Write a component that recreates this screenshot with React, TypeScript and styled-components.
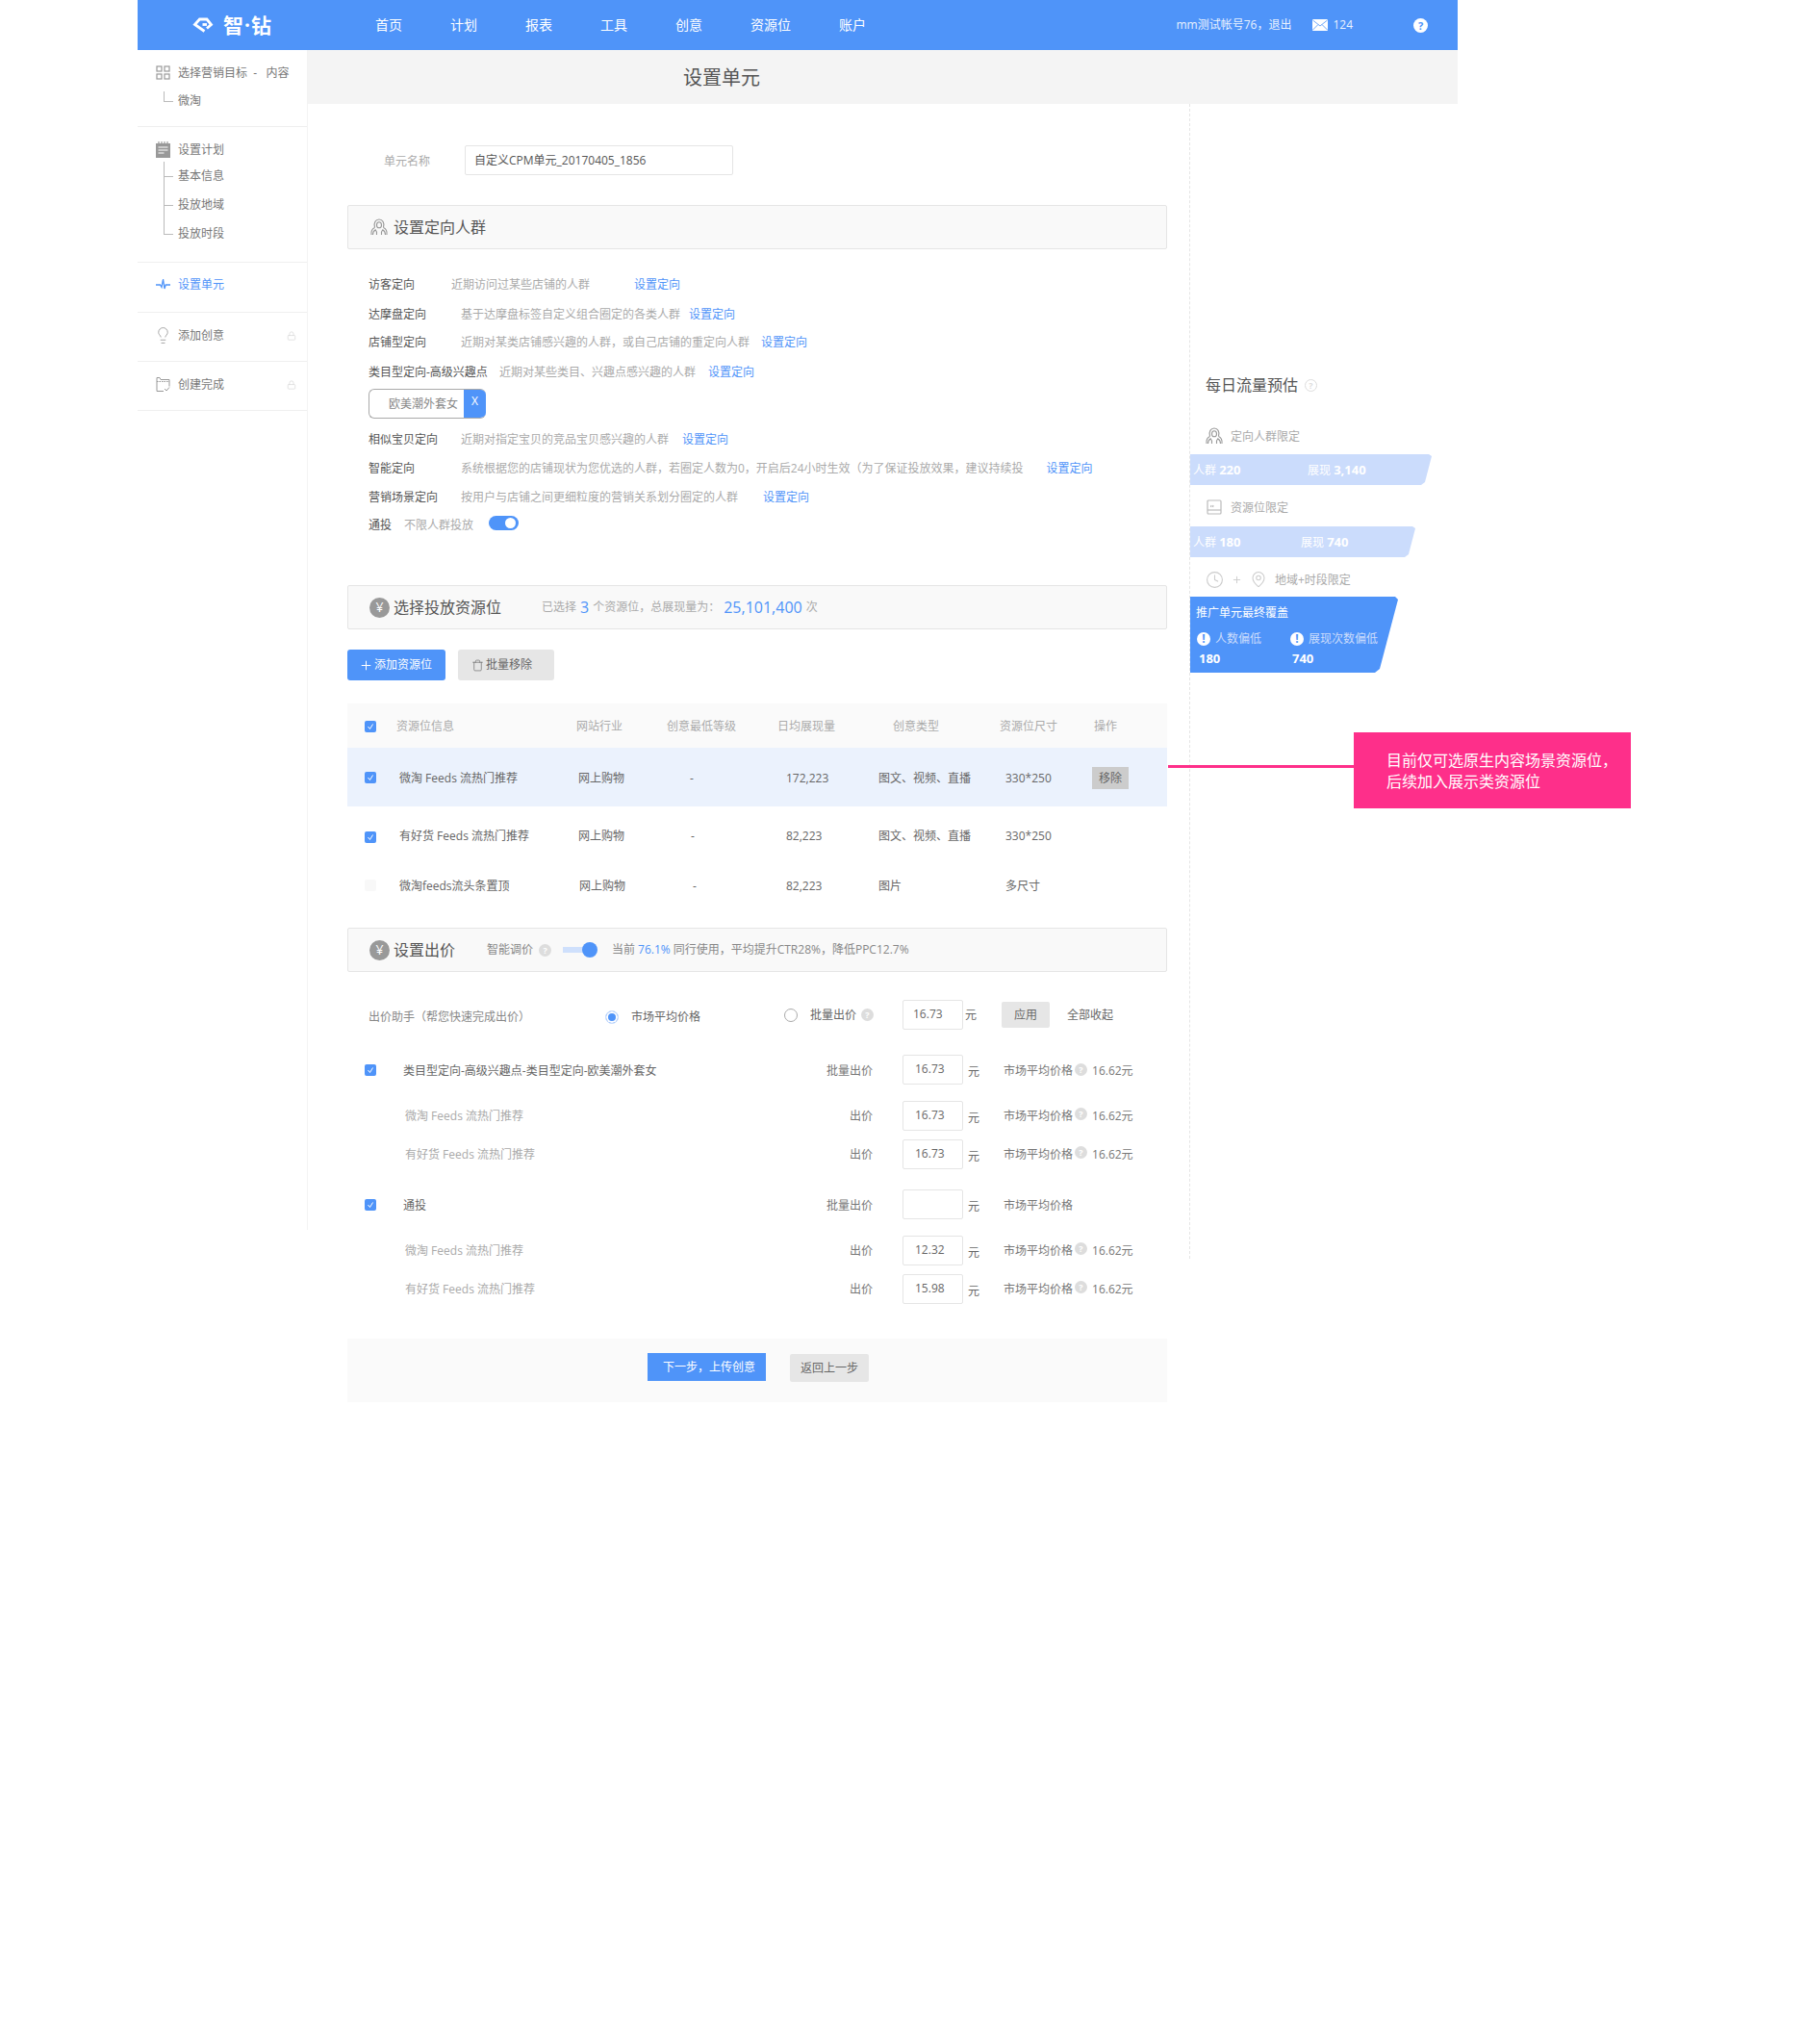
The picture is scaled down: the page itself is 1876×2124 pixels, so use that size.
import React from 'react'
import styled, { createGlobalStyle } from 'styled-components'
import { Clock, Lightbulb, Lock, MapPin, Plus, Trash } from 'lucide-react'

const BLUE = '#4f94f9'

const GlobalStyle = createGlobalStyle`
  html, body {
    margin: 0;
    background: #fff;
  }
  * {
    box-sizing: border-box;
  }
`

const navItems = ['首页', '计划', '报表', '工具', '创意', '资源位', '账户']

const targets = [
  { label: '访客定向', w: 86, desc: '近期访问过某些店铺的人群', gap: 46, top: 26 },
  { label: '达摩盘定向', w: 96, desc: '基于达摩盘标签自定义组合圈定的各类人群', gap: 9, top: 11 },
  { label: '店铺型定向', w: 96, desc: '近期对某类店铺感兴趣的人群，或自己店铺的重定向人群', gap: 12, top: 9 },
  { label: '类目型定向-高级兴趣点', w: 136, desc: '近期对某些类目、兴趣点感兴趣的人群', gap: 13, top: 11 },
]

const targetsAfterTag = [
  { label: '相似宝贝定向', w: 96, desc: '近期对指定宝贝的竞品宝贝感兴趣的人群', gap: 14, top: 11 },
  {
    label: '智能定向',
    w: 96,
    desc: '系统根据您的店铺现状为您优选的人群，若圈定人数为0，开启后24小时生效（为了保证投放效果，建议持续投',
    gap: 24,
    top: 10,
  },
  { label: '营销场景定向', w: 96, desc: '按用户与店铺之间更细粒度的营销关系划分圈定的人群', gap: 26, top: 10 },
]

const slots = [
  { name: '微淘 Feeds 流热门推荐', shop: 2, dash: 24, views: '172,223', type: '图文、视频、直播', size: '330*250', h: 61, active: true, checked: true, shift: 0 },
  { name: '有好货 Feeds 流热门推荐', shop: 2, dash: 25, views: '82,223', type: '图文、视频、直播', size: '330*250', h: 60, active: false, checked: true, shift: 2 },
  { name: '微淘feeds流头条置顶', shop: 3, dash: 27, views: '82,223', type: '图片', size: '多尺寸', h: 44, active: false, checked: false, shift: 0 },
]

const bids = [
  { top: 26, group: true, label: '类目型定向-高级兴趣点-类目型定向-欧美潮外套女', tag: '批量出价', value: '16.73', price: true },
  { top: 17, group: false, label: '微淘 Feeds 流热门推荐', tag: '出价', value: '16.73', price: true },
  { top: 9, group: false, label: '有好货 Feeds 流热门推荐', tag: '出价', value: '16.73', price: true },
  { top: 21, group: true, label: '通投', tag: '批量出价', value: '', price: false },
  { top: 17, group: false, label: '微淘 Feeds 流热门推荐', tag: '出价', value: '12.32', price: true },
  { top: 9, group: false, label: '有好货 Feeds 流热门推荐', tag: '出价', value: '15.98', price: true },
]

const PeopleIcon = () => (
  <svg width="20" height="20" viewBox="0 0 20 20" fill="none" stroke="#999" strokeWidth="1.1">
    <path d="M5.5 10.5C4 5.5 6.5 2 10 2s6 3.500 4.500 8.500" />
    <path d="M7.500 8c0-2 1-3.200 2.500-3.200S12.500 6 12.500 8c0 1.500-1 2.800-2.500 2.800S7.500 9.500 7.500 8z" />
    <path d="M5.500 10.500C3 11.500 1.500 13.500 2 18M3.500 18c0-2.500.8-4 2.800-5.200 1 .9 1.500 2.500 1.200 5.200" />
    <path d="M14.500 10.500C17 11.500 18.500 13.500 18 18M16.500 18c0-2.500-.8-4-2.800-5.200-1 .9-1.500 2.500-1.200 5.200" />
  </svg>
)

const GridIcon = () => (
  <svg width="15" height="15" viewBox="0 0 15 15" fill="none" stroke="#999" strokeWidth="1.2">
    <rect x="1" y="1" width="5" height="5" />
    <rect x="9" y="1" width="5" height="5" />
    <rect x="1" y="9" width="5" height="5" />
    <rect x="9" y="9" width="5" height="5" />
  </svg>
)

const PlanIcon = () => (
  <svg width="15" height="17" viewBox="0 0 15 17">
    <path d="M0 2h15v15H0z" fill="#999" />
    <path d="M3 0v3M6 0v3M9 0v3M12 0v3" stroke="#999" strokeWidth="1.200" />
    <path d="M2.500 6h10M2.500 9h10M2.500 12h6" stroke="#fff" strokeWidth="1.200" />
  </svg>
)

const PulseIcon = () => (
  <svg width="15" height="15" viewBox="0 0 15 15" fill="none" stroke={BLUE} strokeWidth="1.300">
    <path d="M0 8h4.500L6 10.500 7.500 2 9 12l1.200-4H15" />
  </svg>
)

const FolderCheckIcon = () => (
  <svg width="15" height="17" viewBox="0 0 15 17" fill="none" stroke="#999" strokeWidth="1">
    <path d="M8 15.500H1V1.500h3l1 2h9v7" />
    <path d="M1 5.500h13" strokeDasharray="1.500 1" />
    <path d="M9 13l2 2 3-3.500" />
  </svg>
)

const SlotIcon = () => (
  <svg width="16" height="16" viewBox="0 0 16 16" fill="none" stroke="#bbb" strokeWidth="1.200">
    <rect x="1" y="1" width="14" height="14" rx="1" />
    <path d="M1 11h14" />
    <path d="M5 6l-.5 2M7 6l-.5 2" />
  </svg>
)

const MailIcon = () => (
  <svg width="16" height="12" viewBox="0 0 16 12">
    <rect width="16" height="12" rx="1" fill="#fff" />
    <path d="M0.500 1l7.500 6 7.500-6M0.500 11l5.500-5.500M15.500 11L10 5.500" fill="none" stroke={BLUE} strokeWidth="0.800" />
  </svg>
)

const LogoMark = () => (
  <svg width="22" height="16" viewBox="0 0 22 16" fill="none" stroke="#fff" strokeWidth="2.800">
    <path d="M12.500 14.500L2.500 7.500 7.500 2H15l4.500 5.500L15 11.500" />
    <path d="M15 7.500h-4.500" />
  </svg>
)

const Check = () => (
  <svg width="12" height="12" viewBox="0 0 12 12" fill="none" stroke="#fff" strokeWidth="1">
    <path d="M3.500 6l2 2.500 3-5" />
  </svg>
)

const App = () => {
  return (
    <Root>
      <GlobalStyle />
      <Header>
        <Logo>
          <LogoMark />
          <LogoWord>智·钻</LogoWord>
        </Logo>
        <Nav>
          {navItems.map((item) => (
            <NavItem key={item}>{item}</NavItem>
          ))}
        </Nav>
        <UserArea>
          <span>mm测试帐号76，退出</span>
          <MailBox>
            <MailIcon />
            124
          </MailBox>
          <HelpDot $kind="white" $size={15}>?</HelpDot>
        </UserArea>
      </Header>

      <Body>
        <Sidebar>
          <SideGroup $h={80} $pad={13}>
            <SideRow>
              <IconSlot><GridIcon /></IconSlot>
              <span>选择营销目标&nbsp;&nbsp;-&nbsp;&nbsp;&nbsp;内容</span>
            </SideRow>
            <SubList $top={10}>
              <SubRow>
                <Stem $last $h={20} />
                微淘
              </SubRow>
            </SubList>
          </SideGroup>
          <SideGroup $h={141} $pad={13}>
            <SideRow>
              <IconSlot><PlanIcon /></IconSlot>
              <span>设置计划</span>
            </SideRow>
            <SubList $top={3}>
              <SubRow $h={30}><Stem $h={30} />基本信息</SubRow>
              <SubRow $h={30}><Stem $h={30} />投放地域</SubRow>
              <SubRow $h={30}><Stem $last $h={30} />投放时段</SubRow>
            </SubList>
          </SideGroup>
          <SideGroup $h={52} $pad={12}>
            <SideRow $active>
              <IconSlot><PulseIcon /></IconSlot>
              <span>设置单元</span>
            </SideRow>
          </SideGroup>
          <SideGroup $h={51} $pad={13}>
            <SideRow>
              <IconSlot><Lightbulb size={19} color="#999" strokeWidth={1.1} /></IconSlot>
              <span>添加创意</span>
              <LockSlot><Lock size={10} color="#ddd" /></LockSlot>
            </SideRow>
          </SideGroup>
          <SideGroup $h={51} $pad={13}>
            <SideRow>
              <IconSlot><FolderCheckIcon /></IconSlot>
              <span>创建完成</span>
              <LockSlot><Lock size={10} color="#ddd" /></LockSlot>
            </SideRow>
          </SideGroup>
        </Sidebar>

        <Content>
          <TitleBar>设置单元</TitleBar>
          <Columns>
            <Main>
              <NameRow>
                <NameLabel>单元名称</NameLabel>
                <NameInput>自定义CPM单元_20170405_1856</NameInput>
              </NameRow>

              <SectionHead $top={31}>
                <IconSlot><PeopleIcon /></IconSlot>
                <SectionTitle>设置定向人群</SectionTitle>
              </SectionHead>

              {targets.map((t) => (
                <TargetRow key={t.label} $top={t.top}>
                  <TargetLabel $w={t.w}>{t.label}</TargetLabel>
                  <Muted>{t.desc}</Muted>
                  <TargetLink $gap={t.gap}>设置定向</TargetLink>
                </TargetRow>
              ))}

              <Tag>
                <TagText>欧美潮外套女</TagText>
                <TagClose>X</TagClose>
              </Tag>

              {targetsAfterTag.map((t) => (
                <TargetRow key={t.label} $top={t.top}>
                  <TargetLabel $w={t.w}>{t.label}</TargetLabel>
                  <Muted>{t.desc}</Muted>
                  <TargetLink $gap={t.gap}>设置定向</TargetLink>
                </TargetRow>
              ))}

              <TargetRow $top={9}>
                <TargetLabel $w={37}>通投</TargetLabel>
                <Muted>不限人群投放</Muted>
                <Toggle />
              </TargetRow>

              <SectionHead $top={53}>
                <CoinIcon>¥</CoinIcon>
                <SectionTitle>选择投放资源位</SectionTitle>
                <SummaryText>
                  已选择<BlueNum $size={16} $side={4}>3</BlueNum>个资源位，总展现量为：
                  <BlueNum $size={16} $side={4}>25,101,400</BlueNum>次
                </SummaryText>
              </SectionHead>

              <ButtonRow>
                <PrimaryButton>
                  <Plus size={15} strokeWidth={1.6} />
                  添加资源位
                </PrimaryButton>
                <GrayButton>
                  <Trash size={13} strokeWidth={1.2} />
                  批量移除
                </GrayButton>
              </ButtonRow>

              <TableHead>
                <CheckCell $shift={1}><CheckBox $on><Check /></CheckBox></CheckCell>
                <Cell>资源位信息</Cell>
                <Cell>网站行业</Cell>
                <Cell>创意最低等级</Cell>
                <Cell>日均展现量</Cell>
                <Cell $pad={15}>创意类型</Cell>
                <Cell>资源位尺寸</Cell>
                <Cell $pad={2}>操作</Cell>
              </TableHead>
              {slots.map((s) => (
                <TableRow key={s.name} $h={s.h} $active={s.active}>
                  <CheckCell $shift={s.shift}>
                    <CheckBox $on={s.checked}>{s.checked && <Check />}</CheckBox>
                  </CheckCell>
                  <Cell $pad={3}>{s.name}</Cell>
                  <Cell $pad={s.shop}>网上购物</Cell>
                  <Cell $pad={s.dash}>-</Cell>
                  <Cell $pad={9}>{s.views}</Cell>
                  <Cell>{s.type}</Cell>
                  <Cell $pad={6}>{s.size}</Cell>
                  <Cell>{s.active && <RemoveTag>移除</RemoveTag>}</Cell>
                </TableRow>
              ))}

              <SectionHead $top={22}>
                <CoinIcon>¥</CoinIcon>
                <SectionTitle>设置出价</SectionTitle>
                <SmartLabel>智能调价</SmartLabel>
                <HelpDot $kind="solid" $size={13}>?</HelpDot>
                <Slider />
                <SmartText>
                  当前<BlueNum $size={12} $side={3}>76.1%</BlueNum>同行使用，平均提升CTR28%，降低PPC12.7%
                </SmartText>
              </SectionHead>

              <HelperRow>
                <HelperCell $shift={5}>出价助手（帮您快速完成出价）</HelperCell>
                <HelperCell $shift={5} $dark>
                  <Radio $on />
                  市场平均价格
                </HelperCell>
                <HelperCell $dark>
                  <Radio />
                  批量出价
                  <HelpDot $kind="solid" $size={13}>?</HelpDot>
                </HelperCell>
                <HelperCell $dark>
                  <PriceInput $pad={10}>16.73</PriceInput>
                  元
                </HelperCell>
                <div><ApplyButton>应用</ApplyButton></div>
                <HelperCell $dark>全部收起</HelperCell>
              </HelperRow>

              {bids.map((b, i) => (
                <BidRow key={i} $top={b.top}>
                  <BidCheck>{b.group && <CheckBox $on><Check /></CheckBox>}</BidCheck>
                  <BidLabel $group={b.group}>{b.label}</BidLabel>
                  <BidTag $group={b.group}>{b.tag}</BidTag>
                  <PriceInput $pad={12}>{b.value}</PriceInput>
                  <Unit>元</Unit>
                  <MarketPrice $group={b.group}>
                    市场平均价格
                    {b.price && <HelpDot $kind="solid" $size={13}>?</HelpDot>}
                    {b.price && <MarketValue>16.62元</MarketValue>}
                  </MarketPrice>
                </BidRow>
              ))}

              <Footer>
                <NextButton>下一步，上传创意</NextButton>
                <BackButton>返回上一步</BackButton>
              </Footer>
            </Main>

            <Aside>
              <AsideTitle>
                每日流量预估
                <HelpDot $kind="outline" $size={13}>?</HelpDot>
              </AsideTitle>
              <LimitRow $top={31}>
                <LimitIcon><PeopleIcon /></LimitIcon>
                <span>定向人群限定</span>
              </LimitRow>
              <LightBar $w={251} $top={9}>
                <BarPair $w={119}>人群 <b>220</b></BarPair>
                <BarPair>展现 <b>3,140</b></BarPair>
              </LightBar>
              <LimitRow $top={13}>
                <LimitIcon><SlotIcon /></LimitIcon>
                <span>资源位限定</span>
              </LimitRow>
              <LightBar $w={234} $top={10}>
                <BarPair $w={112}>人群 <b>180</b></BarPair>
                <BarPair>展现 <b>740</b></BarPair>
              </LightBar>
              <LimitRow $top={13}>
                <Clock size={19} color="#ccc" strokeWidth={1.4} />
                <Plus size={11} color="#ccc" />
                <MapPin size={18} color="#ccc" strokeWidth={1.4} />
                <span>地域+时段限定</span>
              </LimitRow>
              <FinalBar>
                <FinalTitle>推广单元最终覆盖</FinalTitle>
                <FinalGrid>
                  <FinalWarn><WarnDot>!</WarnDot>人数偏低</FinalWarn>
                  <FinalWarn><WarnDot>!</WarnDot>展现次数偏低</FinalWarn>
                  <FinalValue>180</FinalValue>
                  <FinalValue>740</FinalValue>
                </FinalGrid>
              </FinalBar>
            </Aside>
          </Columns>
        </Content>
      </Body>

      <Callout>
        <Leader />
        <Note>
          目前仅可选原生内容场景资源位，
          <br />
          后续加入展示类资源位
        </Note>
      </Callout>
    </Root>
  )
}

export default App

const Root = styled.div`
  position: relative;
  width: 1372px;
  min-height: 2124px;
  margin-left: 143px;
  font-family: 'Open Sans', 'Noto Sans CJK SC', sans-serif;
  font-size: 12px;
  line-height: 20px;
  color: #666;
`
const Header = styled.header`
  display: flex;
  align-items: center;
  height: 52px;
  background: ${BLUE};
  color: #fff;
`
const Logo = styled.div`
  display: flex;
  align-items: center;
  gap: 10px;
  width: 247px;
  padding-left: 57px;
`
const LogoWord = styled.span`
  font-size: 21px;
  font-weight: 700;
  letter-spacing: 1px;
`
const Nav = styled.nav`
  display: flex;
  gap: 50px;
`
const NavItem = styled.span`
  font-size: 14px;
`
const UserArea = styled.div`
  display: flex;
  align-items: center;
  margin-left: auto;
  padding-right: 31px;
  color: #eaf2fe;
`
const MailBox = styled.span`
  display: flex;
  align-items: center;
  gap: 5px;
  margin: 0 63px 0 22px;
`
const HelpDot = styled.span<{ $kind: 'white' | 'solid' | 'outline'; $size: number }>`
  display: inline-flex;
  flex: none;
  align-items: center;
  justify-content: center;
  width: ${(p) => p.$size}px;
  height: ${(p) => p.$size}px;
  border-radius: 50%;
  font-size: ${(p) => p.$size - 4}px;
  font-weight: 700;
  line-height: 1;
  background: ${(p) => (p.$kind === 'white' ? '#fff' : p.$kind === 'solid' ? '#ddd' : 'transparent')};
  color: ${(p) => (p.$kind === 'white' ? BLUE : p.$kind === 'solid' ? '#fff' : '#ddd')};
  border: ${(p) => (p.$kind === 'outline' ? '1px solid #ddd' : 'none')};
`
const Body = styled.div`
  display: flex;
  align-items: flex-start;
`
const Sidebar = styled.aside`
  flex: none;
  width: 177px;
  height: 1226px;
  border-right: 1px solid #f3f3f3;
`
const SideGroup = styled.div<{ $h: number; $pad: number }>`
  height: ${(p) => p.$h}px;
  padding-top: ${(p) => p.$pad}px;
  border-bottom: 1px solid #efefef;
`
const SideRow = styled.div<{ $active?: boolean }>`
  display: flex;
  align-items: center;
  gap: 8px;
  height: 20px;
  padding-left: 19px;
  color: ${(p) => (p.$active ? BLUE : '#777')};
  span + span {
    padding-top: 1px;
  }
`
const IconSlot = styled.span`
  display: flex;
  flex: none;
  align-items: center;
  justify-content: center;
  width: 15px;
  svg {
    flex: none;
  }
`
const LockSlot = styled.span`
  display: flex;
  margin-left: auto;
  margin-right: 11px;
`
const SubList = styled.div<{ $top: number }>`
  margin-top: ${(p) => p.$top}px;
  padding-left: 27px;
`
const SubRow = styled.div<{ $h?: number }>`
  display: flex;
  align-items: center;
  gap: 5px;
  height: ${(p) => p.$h ?? 20}px;
  color: #777;
`
const Stem = styled.span<{ $last?: boolean; $h: number }>`
  flex: none;
  width: 10px;
  height: ${(p) => p.$h}px;
  background:
    linear-gradient(#bbb, #bbb) left top / 1px ${(p) => (p.$last ? '50%' : '100%')} no-repeat,
    linear-gradient(#bbb, #bbb) left center / 10px 1px no-repeat;
`
const Content = styled.div`
  flex: 1;
  min-width: 0;
`
const TitleBar = styled.div`
  height: 56px;
  padding-left: 390px;
  background: #f4f4f4;
  color: #555;
  font-size: 20px;
  line-height: 57px;
`
const Columns = styled.div`
  display: flex;
  align-items: flex-start;
`
const Main = styled.main`
  flex: none;
  width: 916px;
  padding: 0 23px 0 41px;
`
const NameRow = styled.div`
  display: flex;
  align-items: center;
  margin-top: 43px;
`
const NameLabel = styled.span`
  width: 122px;
  padding: 2px 0 0 38px;
  color: #aaa;
`
const NameInput = styled.div`
  width: 279px;
  height: 31px;
  padding-left: 9px;
  border: 1px solid #e5e5e5;
  border-radius: 2px;
  color: #555;
  line-height: 29px;
`
const SectionHead = styled.div<{ $top: number }>`
  display: flex;
  align-items: center;
  height: 46px;
  margin-top: ${(p) => p.$top}px;
  padding-left: 22px;
  background: #f9f9f9;
  border: 1px solid #e5e5e5;
  border-radius: 2px;
  ${IconSlot} {
    width: 20px;
    margin-right: 5px;
  }
`
const SectionTitle = styled.span`
  color: #555;
  font-size: 16px;
`
const CoinIcon = styled.span`
  display: flex;
  flex: none;
  align-items: center;
  justify-content: center;
  width: 21px;
  height: 21px;
  margin-right: 4px;
  border-radius: 50%;
  background: #999;
  color: #fff;
  font-size: 14px;
`
const TargetRow = styled.div<{ $top: number }>`
  display: flex;
  align-items: center;
  height: 20px;
  margin-top: ${(p) => p.$top}px;
  padding: 2px 0 0 22px;
  white-space: nowrap;
`
const TargetLabel = styled.span<{ $w: number }>`
  flex: none;
  width: ${(p) => p.$w}px;
  color: #555;
`
const Muted = styled.span`
  color: #aaa;
`
const TargetLink = styled.span<{ $gap: number }>`
  margin-left: ${(p) => p.$gap}px;
  color: ${BLUE};
`
const Tag = styled.div`
  display: flex;
  width: 122px;
  height: 31px;
  margin: 8px 0 0 22px;
  overflow: hidden;
  border: 1px solid #aaa;
  border-right: 0;
  border-radius: 6px;
`
const TagText = styled.span`
  flex: 1;
  padding-left: 20px;
  color: #888;
  line-height: 29px;
`
const TagClose = styled.span`
  width: 23px;
  margin: -1px 0;
  background: ${BLUE};
  color: #fff;
  font-size: 12px;
  line-height: 26px;
  text-align: center;
`
const Toggle = styled.span`
  display: flex;
  justify-content: flex-end;
  width: 31px;
  height: 15px;
  margin: -5px 0 0 16px;
  padding: 2px 3px;
  border-radius: 8px;
  background: ${BLUE};
  &::after {
    content: '';
    width: 11px;
    height: 11px;
    border-radius: 50%;
    background: #fff;
  }
`
const SummaryText = styled.span`
  display: flex;
  align-items: center;
  margin-left: 42px;
  color: #aaa;
`
const BlueNum = styled.span<{ $size: number; $side: number }>`
  margin: 0 ${(p) => p.$side}px;
  color: ${BLUE};
  font-size: ${(p) => p.$size}px;
`
const ButtonRow = styled.div`
  display: flex;
  gap: 13px;
  margin: 21px 0 24px;
`
const PrimaryButton = styled.div`
  display: flex;
  align-items: center;
  gap: 1px;
  width: 102px;
  height: 32px;
  padding-left: 12px;
  border-radius: 3px;
  background: ${BLUE};
  color: #fff;
`
const GrayButton = styled.div`
  display: flex;
  align-items: center;
  gap: 2px;
  width: 100px;
  height: 32px;
  padding-left: 14px;
  border-radius: 3px;
  background: #e6e6e6;
  color: #666;
`
const tableColumns = '51px 187px 94px 115px 105px 126px 96px 78px'
const TableHead = styled.div`
  display: grid;
  grid-template-columns: ${tableColumns};
  align-items: center;
  height: 46px;
  background: #fafafa;
  color: #aaa;
`
const TableRow = styled.div<{ $h: number; $active: boolean }>`
  display: grid;
  grid-template-columns: ${tableColumns};
  align-items: center;
  height: ${(p) => p.$h}px;
  background: ${(p) => (p.$active ? '#ebf2fd' : '#fff')};
  color: #666;
`
const CheckCell = styled.div<{ $shift: number }>`
  display: flex;
  padding: ${(p) => p.$shift * 2}px 0 0 18px;
`
const Cell = styled.div<{ $pad?: number }>`
  padding: 2px 0 0 ${(p) => p.$pad ?? 0}px;
  white-space: nowrap;
`
const CheckBox = styled.span<{ $on?: boolean }>`
  display: flex;
  flex: none;
  width: 12px;
  height: 12px;
  border-radius: 2px;
  background: ${(p) => (p.$on ? BLUE : '#f8f8f8')};
`
const RemoveTag = styled.span`
  display: block;
  width: 38px;
  height: 23px;
  background: #ccc;
  line-height: 23px;
  text-align: center;
`
const SmartLabel = styled.span`
  margin: 0 6px 0 33px;
  color: #888;
`
const Slider = styled.span`
  display: flex;
  align-items: center;
  width: 36px;
  height: 16px;
  margin: 0 15px 0 12px;
  background: linear-gradient(#cfe0fc, #cfe0fc) left center / 24px 6px no-repeat;
  &::after {
    content: '';
    width: 16px;
    height: 16px;
    margin-left: 20px;
    border-radius: 50%;
    background: ${BLUE};
  }
`
const SmartText = styled.span`
  color: #888;
`
const HelperRow = styled.div`
  display: grid;
  grid-template-columns: 246px 186px 123px 103px 68px 1fr;
  align-items: center;
  height: 31px;
  margin-top: 29px;
  padding-left: 22px;
`
const HelperCell = styled.div<{ $shift?: number; $dark?: boolean }>`
  display: flex;
  align-items: center;
  gap: 2px;
  margin-top: ${(p) => p.$shift ?? 0}px;
  color: ${(p) => (p.$dark ? '#666' : '#888')};
  white-space: nowrap;
  ${HelpDot} {
    margin-left: 3px;
  }
`
const Radio = styled.span<{ $on?: boolean }>`
  flex: none;
  width: 14px;
  height: 14px;
  margin-right: 11px;
  border-radius: 50%;
  background: ${(p) => (p.$on ? BLUE : '#fff')};
  border: 1px solid ${(p) => (p.$on ? '#cfe0fc' : '#aaa')};
  box-shadow: ${(p) => (p.$on ? 'inset 0 0 0 2px #fff' : 'none')};
`
const PriceInput = styled.div<{ $pad: number }>`
  flex: none;
  width: 63px;
  height: 31px;
  padding-left: ${(p) => p.$pad}px;
  border: 1px solid #e5e5e5;
  border-radius: 2px;
  line-height: 28px;
  color: #666;
`
const ApplyButton = styled.div`
  width: 50px;
  height: 27px;
  border-radius: 2px;
  background: #e6e6e6;
  line-height: 27px;
  text-align: center;
`
const BidRow = styled.div<{ $top: number }>`
  display: grid;
  grid-template-columns: 58px 410px 109px 63px 42px 1fr;
  align-items: center;
  height: 31px;
  margin-top: ${(p) => p.$top}px;
  white-space: nowrap;
`
const BidCheck = styled.div`
  display: flex;
  padding-left: 18px;
`
const BidLabel = styled.div<{ $group: boolean }>`
  padding: ${(p) => (p.$group ? '3px 0 0 0' : '0 0 0 2px')};
  color: ${(p) => (p.$group ? '#666' : '#aaa')};
`
const BidTag = styled.div<{ $group: boolean }>`
  padding: ${(p) => (p.$group ? '3px' : '0')} 31px 0 0;
  text-align: right;
  color: #777;
`
const Unit = styled.div`
  padding: 4px 0 0 5px;
`
const MarketPrice = styled.div<{ $group: boolean }>`
  display: flex;
  align-items: center;
  gap: 2px;
  padding-top: ${(p) => (p.$group ? 3 : 0)}px;
  color: #777;
  ${HelpDot} {
    margin-bottom: 4px;
  }
`
const MarketValue = styled.span`
  margin-left: 3px;
`
const Footer = styled.div`
  display: flex;
  align-items: flex-start;
  gap: 25px;
  height: 66px;
  margin-top: 36px;
  padding: 15px 0 0 312px;
  background: #fafafa;
`
const NextButton = styled.div`
  width: 123px;
  height: 29px;
  padding-left: 16px;
  background: ${BLUE};
  color: #fff;
  line-height: 29px;
`
const BackButton = styled.div`
  width: 82px;
  height: 29px;
  margin-top: 1px;
  border-radius: 2px;
  background: #e6e6e6;
  line-height: 29px;
  text-align: center;
`
const Aside = styled.aside`
  flex: 1;
  height: 1200px;
  padding-top: 280px;
  border-left: 1px dashed #e5e5e5;
`
const AsideTitle = styled.div`
  display: flex;
  align-items: center;
  gap: 7px;
  height: 24px;
  padding-left: 16px;
  color: #555;
  font-size: 16px;
`
const LimitRow = styled.div<{ $top: number }>`
  display: flex;
  align-items: center;
  gap: 8px;
  height: 20px;
  margin-top: ${(p) => p.$top}px;
  padding-left: 16px;
  color: #aaa;
  svg {
    flex: none;
  }
  span {
    padding-top: 2px;
  }
`
const LimitIcon = styled.span`
  display: flex;
  justify-content: center;
  width: 18px;
  padding: 0 !important;
`
const LightBar = styled.div<{ $w: number; $top: number }>`
  display: flex;
  align-items: center;
  width: ${(p) => p.$w}px;
  height: 32px;
  margin-top: ${(p) => p.$top}px;
  padding-left: 3px;
  background: #cbdcfc;
  color: #fff;
  clip-path: polygon(0 0, calc(100% - 3px) 0, 100% 2px, calc(100% - 7px) calc(100% - 3px), calc(100% - 11px) 100%, 0 100%);
`
const BarPair = styled.span<{ $w?: number }>`
  width: ${(p) => (p.$w ? `${p.$w}px` : 'auto')};
  b {
    font-size: 13px;
  }
`
const FinalBar = styled.div`
  width: 216px;
  height: 79px;
  margin-top: 8px;
  padding: 7px 0 0 6px;
  background: ${BLUE};
  color: #fff;
  clip-path: polygon(0 0, calc(100% - 3px) 0, 100% 3px, calc(100% - 19px) calc(100% - 4px), calc(100% - 24px) 100%, 0 100%);
`
const FinalTitle = styled.div`
  height: 20px;
`
const FinalGrid = styled.div`
  display: grid;
  grid-template-columns: 97px 1fr;
  margin-top: 7px;
  padding-left: 1px;
`
const FinalWarn = styled.div`
  display: flex;
  align-items: center;
  gap: 5px;
  color: #cbdcfc;
`
const WarnDot = styled.span`
  display: flex;
  align-items: center;
  justify-content: center;
  width: 14px;
  height: 14px;
  border-radius: 50%;
  background: #fff;
  color: ${BLUE};
  font-size: 12px;
  font-weight: 700;
`
const FinalValue = styled.div`
  padding-left: 2px;
  font-size: 13px;
  font-weight: 700;
`
const Callout = styled.div`
  position: absolute;
  top: 761px;
  left: 1071px;
  display: flex;
  align-items: flex-start;
`
const Leader = styled.span`
  width: 193px;
  height: 3px;
  margin-top: 34px;
  background: #fe2f8a;
`
const Note = styled.div`
  width: 288px;
  height: 79px;
  padding: 18px 0 0 34px;
  background: #fe2f8a;
  color: #fff;
  font-size: 16px;
  line-height: 22px;
`
